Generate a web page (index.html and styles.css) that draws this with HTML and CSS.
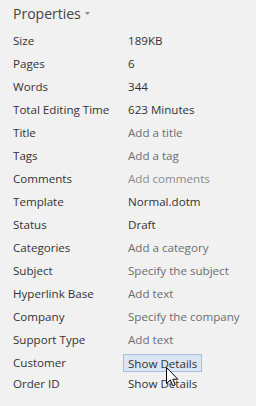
FILE: index.html
```html
<!DOCTYPE html>
<html lang="en">
<head>
    <meta charset="UTF-8">
    <title>Properties</title>
    <link rel="stylesheet" href="styles.css">
</head>
<body>
    <div class="panel">
        <div class="header">
            <span class="heading">Properties</span>
            <svg class="caret" width="5" height="3" viewBox="0 0 5 3"><path d="M0 0H5L2.5 3Z" fill="#8a8a8a"/></svg>
        </div>
        <div class="props">
            <div class="row"><span class="label">Size</span><span class="value">189KB</span></div>
            <div class="row"><span class="label">Pages</span><span class="value">6</span></div>
            <div class="row"><span class="label">Words</span><span class="value">344</span></div>
            <div class="row"><span class="label">Total Editing Time</span><span class="value">623 Minutes</span></div>
            <div class="row"><span class="label">Title</span><span class="value hint">Add a title</span></div>
            <div class="row"><span class="label">Tags</span><span class="value hint">Add a tag</span></div>
            <div class="row"><span class="label">Comments</span><span class="value hint light">Add comments</span></div>
            <div class="row"><span class="label">Template</span><span class="value">Normal.dotm</span></div>
            <div class="row"><span class="label">Status</span><span class="value">Draft</span></div>
            <div class="row"><span class="label">Categories</span><span class="value hint">Add a category</span></div>
            <div class="row"><span class="label">Subject</span><span class="value hint">Specify the subject</span></div>
            <div class="row"><span class="label">Hyperlink Base</span><span class="value hint">Add text</span></div>
            <div class="row"><span class="label">Company</span><span class="value hint">Specify the company</span></div>
            <div class="row"><span class="label">Support Type</span><span class="value hint">Add text</span></div>
            <div class="row"><span class="label">Customer</span><span class="value"><span class="details hover">Show Details</span></span></div>
            <div class="row short"><span class="label">Order ID</span><span class="value"><span class="details">Show Details</span></span></div>
        </div>
        <svg class="cursor" width="13" height="21" viewBox="0 0 13 21">
            <path d="M0.5 0.5V16.5L4.3 12.9L6.8 18.8L9.2 17.8L6.8 12.2H11.8Z" fill="#fff" stroke="#000" stroke-width="1"/>
        </svg>
    </div>
</body>
</html>
```

FILE: styles.css
```css
body {
    margin: 0;
    background: #f1f1f1;
    font-family: "Open Sans", "Liberation Sans", sans-serif;
}

.panel {
    position: relative;
    width: 256px;
    height: 406px;
    padding: 2px 0 0 13px;
    box-sizing: border-box;
}

.header {
    display: flex;
    align-items: center;
    height: 22px;
}

.heading {
    font-size: 14px;
    color: #444;
}

.caret {
    margin: 1px 0 0 4px;
}

.props {
    margin-top: 5px;
}

.row {
    display: flex;
    align-items: center;
    height: 23px;
    font-size: 11.6px;
}

.row.short {
    height: 18px;
}

.label {
    width: 115px;
    color: #333;
    white-space: nowrap;
}

.value {
    color: #333;
    white-space: nowrap;
}

.hint {
    color: #6d6d6d;
}

.light {
    color: #8a8a8a;
}

.details {
    display: inline-block;
    padding: 0 4px;
    margin-left: -5px;
    height: 18px;
    line-height: 17px;
    border: 1px solid transparent;
    box-sizing: border-box;
}

.details.hover {
    background: #dae5f5;
    border-color: #a4bfe2;
}

.cursor {
    position: absolute;
    left: 166px;
    top: 367px;
}
```
